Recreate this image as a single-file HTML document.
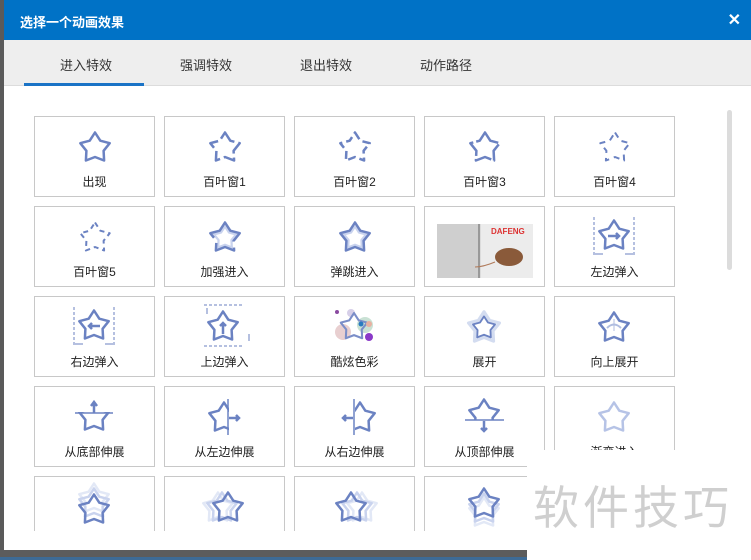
<!DOCTYPE html>
<html><head><meta charset="utf-8"><style>
*{margin:0;padding:0;box-sizing:border-box}
body{width:751px;height:560px;overflow:hidden;background:#5a5a5a;font-family:"Liberation Sans","Noto Sans CJK SC",sans-serif;position:relative}
.dlg{position:absolute;left:4px;top:0;width:747px;height:550px;background:#fff}
.title{position:absolute;left:0;top:0;width:747px;height:40px;background:#0072c6;color:#fff;font-size:13px;font-weight:bold}
.title span{position:absolute;left:16px;top:12px}
.title b{position:absolute;right:10px;top:10px;font-size:16px}
.tabs{position:absolute;left:0;top:40px;width:747px;height:46px;background:#eeeeee;border-bottom:1px solid #dcdcdc}
.tab{position:absolute;top:15px;font-size:13px;color:#333}
.ul{position:absolute;left:20px;top:43px;width:120px;height:3px;background:#1a73c6}
.card{position:absolute;width:121px;height:81px;border:1px solid #c8c8c8;background:#fff}
.card svg{position:absolute;left:0;top:0}
.card .l{position:absolute;left:0;right:0;top:56px;text-align:center;font-size:12px;color:#222}
.clip{position:absolute;left:0;top:0;width:751px;height:531px;overflow:hidden}
.sb{position:absolute;left:727px;top:110px;width:5px;height:160px;background:#dcdcdc;border-radius:3px}
.wm{position:absolute;left:527px;top:450px;width:224px;height:110px;background:#fff}
.wm span{position:absolute;left:6px;top:22px;font-size:46px;color:#cfcfcf;letter-spacing:4px;font-family:"Noto Sans CJK SC",sans-serif}
</style></head><body>
<svg width="0" height="0" style="position:absolute"><defs>
<path id="s" d="M0,-15.5 L5.3,-7.3 L14.7,-4.8 L8.6,2.8 L9.1,12.5 L0,9 L-9.1,12.5 L-8.6,2.8 L-14.7,-4.8 L-5.3,-7.3 Z" fill="none" stroke-linejoin="round"/>
</defs></svg>
<div style="position:absolute;left:0;top:550px;width:751px;height:8px;background:#5c5c5c"></div>
<div style="position:absolute;left:0;top:557px;width:751px;height:3px;background:#3d6b96"></div>
<div class="dlg">
<div class="title"><span>选择一个动画效果</span><b>✕</b></div>
<div class="tabs"><span class="tab" style="left:56px">进入特效</span><span class="tab" style="left:176px">强调特效</span><span class="tab" style="left:296px">退出特效</span><span class="tab" style="left:416px">动作路径</span><div class="ul"></div></div>
</div>
<div class="clip">
<div class="card" style="left:34px;top:116px"><svg width="121" height="60"><use href="#s" transform="translate(60,31)" stroke="#6b82c2" stroke-width="2.5"/></svg><div class="l">出现</div></div>
<div class="card" style="left:164px;top:116px"><svg width="121" height="60"><use href="#s" transform="translate(60,31)" stroke="#6b82c2" stroke-width="2.5" stroke-dasharray="14 4"/></svg><div class="l">百叶窗1</div></div>
<div class="card" style="left:294px;top:116px"><svg width="121" height="60"><use href="#s" transform="translate(60,31)" stroke="#6b82c2" stroke-width="2.5" stroke-dasharray="8 4"/></svg><div class="l">百叶窗2</div></div>
<div class="card" style="left:424px;top:116px"><svg width="121" height="60"><use href="#s" transform="translate(60,31)" stroke="#6b82c2" stroke-width="2.5" stroke-dasharray="18 3"/></svg><div class="l">百叶窗3</div></div>
<div class="card" style="left:554px;top:116px"><svg width="121" height="60"><use href="#s" transform="translate(60,31)" stroke="#6b82c2" stroke-width="2" stroke-dasharray="6 5"/></svg><div class="l">百叶窗4</div></div>
<div class="card" style="left:34px;top:206px"><svg width="121" height="60"><use href="#s" transform="translate(60,31)" stroke="#6b82c2" stroke-width="2" stroke-dasharray="5 4"/></svg><div class="l">百叶窗5</div></div>
<div class="card" style="left:164px;top:206px"><svg width="121" height="60"><use href="#s" transform="translate(60,31) scale(0.75)" stroke="#c9d3ee" stroke-width="3" fill="#eef1fa"/><use href="#s" transform="translate(60,31)" stroke="#6b82c2" stroke-width="2.5" stroke-dasharray="30 6"/></svg><div class="l">加强进入</div></div>
<div class="card" style="left:294px;top:206px"><svg width="121" height="60"><use href="#s" transform="translate(60,31) scale(0.75)" stroke="#c9d3ee" stroke-width="3" fill="#eef1fa"/><use href="#s" transform="translate(60,31)" stroke="#6b82c2" stroke-width="2.5"/></svg><div class="l">弹跳进入</div></div>
<div class="card" style="left:424px;top:206px"><svg width="121" height="79"><rect x="12" y="17" width="96" height="54" fill="#dcdcdc"/><rect x="12" y="17" width="41" height="54" fill="#cfcfcf"/><rect x="53" y="17" width="2" height="54" fill="#999"/><rect x="56" y="17" width="52" height="54" fill="#ececec"/><text x="66" y="27" font-size="8" font-weight="bold" fill="#d33" font-family="Liberation Sans">DAFENG</text><ellipse cx="84" cy="50" rx="14" ry="9" fill="#8a5a3a"/><path d="M70,55 Q58,60 50,60" stroke="#b07a5a" fill="none"/></svg></div>
<div class="card" style="left:554px;top:206px"><svg width="121" height="60"><path d="M39,10V50M79,10V50" stroke="#6b82c2" stroke-dasharray="3 2"/><use href="#s" transform="translate(59,29)" stroke="#6b82c2" stroke-width="2.5"/><path d="M53,29H64M61,26l3,3l-3,3" stroke="#6b82c2" stroke-width="2.5" fill="none"/><path d="M40,47H48M70,47H78" stroke="#6b82c2"/></svg><div class="l">左边弹入</div></div>
<div class="card" style="left:34px;top:296px"><svg width="121" height="60"><path d="M39,10V50M79,10V50" stroke="#6b82c2" stroke-dasharray="3 2"/><use href="#s" transform="translate(59,29)" stroke="#6b82c2" stroke-width="2.5"/><path d="M54,29H65M57,26l-3,3l3,3" stroke="#6b82c2" stroke-width="2.5" fill="none"/><path d="M40,47H48M70,47H78" stroke="#6b82c2"/></svg><div class="l">右边弹入</div></div>
<div class="card" style="left:164px;top:296px"><svg width="121" height="60"><path d="M39,8H79M39,49H79" stroke="#6b82c2" stroke-dasharray="3 2"/><use href="#s" transform="translate(58,30)" stroke="#6b82c2" stroke-width="2.5"/><path d="M58,37V26M55,29l3,-3l3,3" stroke="#6b82c2" stroke-width="2.5" fill="none"/><path d="M42,11V17M84,37V44" stroke="#6b82c2"/></svg><div class="l">上边弹入</div></div>
<div class="card" style="left:294px;top:296px"><svg width="121" height="60"><circle cx="48" cy="35" r="8" fill="#e8cfd0"/><circle cx="56" cy="16" r="4" fill="#d6cfe8"/><circle cx="70" cy="28" r="8" fill="#bcd9c9" opacity=".8"/><circle cx="42" cy="15" r="2" fill="#8a4aa0"/><use href="#s" transform="translate(59,30) scale(0.9)" stroke="#7b8ec8" stroke-width="2.3"/><circle cx="66" cy="27" r="2.5" fill="#2a7ac0"/><circle cx="74" cy="40" r="4" fill="#8a3ac8"/><circle cx="74" cy="27" r="3" fill="#e8b0a0"/></svg><div class="l">酷炫色彩</div></div>
<div class="card" style="left:424px;top:296px"><svg width="121" height="60"><use href="#s" transform="translate(59,31) scale(1.05)" stroke="#d3dcf0" stroke-width="3"/><use href="#s" transform="translate(59,31) scale(0.75)" stroke="#6b82c2" stroke-width="2.5"/></svg><div class="l">展开</div></div>
<div class="card" style="left:554px;top:296px"><svg width="121" height="60"><use href="#s" transform="translate(59,31)" stroke="#6b82c2" stroke-width="2.5"/><path d="M52,31Q59,24 66,31" stroke="#b0bde0" stroke-width="2" fill="none"/><path d="M59,34V22" stroke="#b0bde0"/></svg><div class="l">向上展开</div></div>
<div class="card" style="left:34px;top:386px"><svg width="121" height="60"><use href="#s" transform="translate(59,30)" stroke="#6b82c2" stroke-width="2.5"/><rect x="40" y="12" width="38" height="13" fill="#fff"/><path d="M40,26H78" stroke="#6b82c2" stroke-width="1.5"/><path d="M59,26V16M56,19l3,-4l3,4" stroke="#6b82c2" stroke-width="2.5" fill="none"/></svg><div class="l">从底部伸展</div></div>
<div class="card" style="left:164px;top:386px"><svg width="121" height="60"><use href="#s" transform="translate(59,31)" stroke="#6b82c2" stroke-width="2.5"/><rect x="64" y="10" width="20" height="40" fill="#fff"/><path d="M63,12V48" stroke="#6b82c2" stroke-width="1.5"/><path d="M64,31H74M71,28l3,3l-3,3" stroke="#6b82c2" stroke-width="2.5" fill="none"/></svg><div class="l">从左边伸展</div></div>
<div class="card" style="left:294px;top:386px"><svg width="121" height="60"><use href="#s" transform="translate(65,31)" stroke="#6b82c2" stroke-width="2.5"/><rect x="40" y="10" width="20" height="40" fill="#fff"/><path d="M59,12V48" stroke="#6b82c2" stroke-width="1.5"/><path d="M48,31H58M51,28l-3,3l3,3" stroke="#6b82c2" stroke-width="2.5" fill="none"/></svg><div class="l">从右边伸展</div></div>
<div class="card" style="left:424px;top:386px"><svg width="121" height="60"><use href="#s" transform="translate(59,28)" stroke="#6b82c2" stroke-width="2.5"/><rect x="38" y="33" width="44" height="20" fill="#fff"/><path d="M40,33H79" stroke="#6b82c2" stroke-width="1.5"/><path d="M59,34V44M56,41l3,3l3,-3" stroke="#6b82c2" stroke-width="2.5" fill="none"/></svg><div class="l">从顶部伸展</div></div>
<div class="card" style="left:554px;top:386px"><svg width="121" height="60"><use href="#s" transform="translate(59,31)" stroke="#b6c3e6" stroke-width="2.5"/></svg><div class="l">渐变进入</div></div>
<div class="card" style="left:34px;top:476px"><svg width="121" height="60"><use href="#s" transform="translate(59,22)" stroke="#e2e8f6" stroke-width="2.5"/><use href="#s" transform="translate(59,27)" stroke="#c9d3ee" stroke-width="2.5"/><use href="#s" transform="translate(59,33)" stroke="#6b82c2" stroke-width="2.5"/></svg></div>
<div class="card" style="left:164px;top:476px"><svg width="121" height="60"><use href="#s" transform="translate(53,31)" stroke="#e2e8f6" stroke-width="2.5"/><use href="#s" transform="translate(57,31)" stroke="#c9d3ee" stroke-width="2.5"/><use href="#s" transform="translate(63,31)" stroke="#6b82c2" stroke-width="2.5"/></svg></div>
<div class="card" style="left:294px;top:476px"><svg width="121" height="60"><use href="#s" transform="translate(67,31)" stroke="#e2e8f6" stroke-width="2.5"/><use href="#s" transform="translate(62,31)" stroke="#c9d3ee" stroke-width="2.5"/><use href="#s" transform="translate(56,31)" stroke="#6b82c2" stroke-width="2.5"/></svg></div>
<div class="card" style="left:424px;top:476px"><svg width="121" height="60"><use href="#s" transform="translate(59,36)" stroke="#e2e8f6" stroke-width="2.5"/><use href="#s" transform="translate(59,32)" stroke="#c9d3ee" stroke-width="2.5"/><use href="#s" transform="translate(59,27)" stroke="#6b82c2" stroke-width="2.5"/></svg></div>
</div>
<div class="sb"></div>
<div class="wm"><span>软件技巧</span></div>
</body></html>
